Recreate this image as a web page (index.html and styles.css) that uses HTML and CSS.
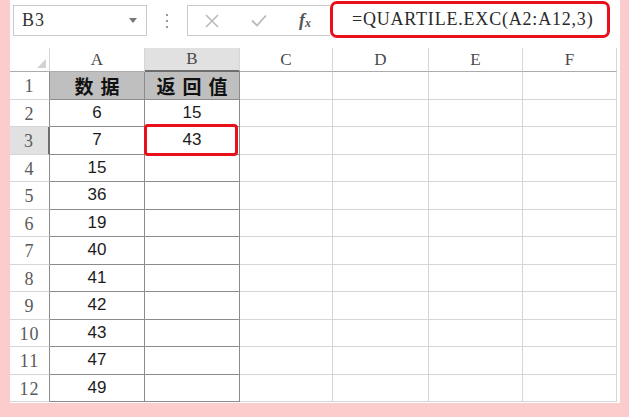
FILE: index.html
```html
<!DOCTYPE html>
<html lang="zh-CN">
<head>
  <meta charset="UTF-8" />
  <title>QUARTILE.EXC</title>
  <link rel="stylesheet" href="styles.css">
</head>
<body>
  <div class="sheet">
    <div class="toolbar">
      <div class="namebox">
        <span>B3</span>
        <span class="caret"></span>
      </div>
      <div class="dots"><i></i><i></i><i></i></div>
      <div class="buttons">
        <svg width="14" height="14" viewBox="0 0 14 14"><path d="M1 1L13 13M13 1L1 13" stroke="#b9b9b9" stroke-width="1.6" fill="none"/></svg>
        <svg width="16" height="13" viewBox="0 0 16 13"><path d="M1 6.5L6 11.5L15 1.5" stroke="#b9b9b9" stroke-width="1.8" fill="none"/></svg>
        <span class="fx">f<sub>x</sub></span>
      </div>
      <div class="formula">=QUARTILE.EXC(A2:A12,3)</div>
    </div>

    <div class="grid">
      <div class="hd corner"><span class="tri"></span></div>
      <div class="hd">A</div>
      <div class="hd sel">B</div>
      <div class="hd">C</div>
      <div class="hd">D</div>
      <div class="hd">E</div>
      <div class="hd">F</div>

      <div class="rh">1</div>
      <div class="c t title">数据</div>
      <div class="c t title">返回值</div>
      <div class="c"></div><div class="c"></div><div class="c"></div><div class="c"></div>

      <div class="rh">2</div>
      <div class="c t">6</div>
      <div class="c t">15</div>
      <div class="c"></div><div class="c"></div><div class="c"></div><div class="c"></div>

      <div class="rh sel">3</div>
      <div class="c t">7</div>
      <div class="c t active">43<span class="mark"></span></div>
      <div class="c"></div><div class="c"></div><div class="c"></div><div class="c"></div>

      <div class="rh">4</div>
      <div class="c t">15</div>
      <div class="c t"></div>
      <div class="c"></div><div class="c"></div><div class="c"></div><div class="c"></div>

      <div class="rh">5</div>
      <div class="c t">36</div>
      <div class="c t"></div>
      <div class="c"></div><div class="c"></div><div class="c"></div><div class="c"></div>

      <div class="rh">6</div>
      <div class="c t">19</div>
      <div class="c t"></div>
      <div class="c"></div><div class="c"></div><div class="c"></div><div class="c"></div>

      <div class="rh">7</div>
      <div class="c t">40</div>
      <div class="c t"></div>
      <div class="c"></div><div class="c"></div><div class="c"></div><div class="c"></div>

      <div class="rh">8</div>
      <div class="c t">41</div>
      <div class="c t"></div>
      <div class="c"></div><div class="c"></div><div class="c"></div><div class="c"></div>

      <div class="rh">9</div>
      <div class="c t">42</div>
      <div class="c t"></div>
      <div class="c"></div><div class="c"></div><div class="c"></div><div class="c"></div>

      <div class="rh">10</div>
      <div class="c t">43</div>
      <div class="c t"></div>
      <div class="c"></div><div class="c"></div><div class="c"></div><div class="c"></div>

      <div class="rh">11</div>
      <div class="c t">47</div>
      <div class="c t"></div>
      <div class="c"></div><div class="c"></div><div class="c"></div><div class="c"></div>

      <div class="rh">12</div>
      <div class="c t">49</div>
      <div class="c t"></div>
      <div class="c"></div><div class="c"></div><div class="c"></div><div class="c"></div>
    </div>
  </div>
</body>
</html>
```

FILE: styles.css
```css
* {
  box-sizing: border-box;
}

body {
  margin: 0;
  background: #fccbcb;
  height: 417px;
  overflow: hidden;
}

.sheet {
  margin-left: 10px;
  width: 610px;
  height: 403px;
  background: white;
}

/* formula bar */
.toolbar {
  height: 48px;
  display: flex;
  align-items: flex-start;
  padding-top: 5px;
}

.namebox {
  margin-left: 3px;
  width: 134px;
  height: 31px;
  border: 1px solid #c9c9c9;
  display: flex;
  align-items: center;
  justify-content: space-between;
  padding: 0 9px 0 8px;
  font-family: "Liberation Serif", serif;
  font-size: 18px;
  letter-spacing: 1px;
  color: #333;
}

.caret {
  border-left: 4px solid transparent;
  border-right: 4px solid transparent;
  border-top: 5px solid #777;
}

.dots {
  width: 40px;
  height: 31px;
  display: flex;
  flex-direction: column;
  align-items: center;
  justify-content: center;
  gap: 4px;
}

.dots i {
  width: 2px;
  height: 2px;
  background: #9a9a9a;
}

.buttons {
  width: 143px;
  height: 31px;
  border: 1px solid #c9c9c9;
  border-right: none;
  display: flex;
  align-items: center;
  padding-left: 17px;
  gap: 32px;
}

.fx {
  font-family: "Liberation Serif", serif;
  font-style: italic;
  font-weight: bold;
  font-size: 18px;
  color: #555;
}

.fx sub {
  font-size: 12px;
  vertical-align: -1px;
}

.formula {
  margin-top: -4px;
  width: 280px;
  height: 37px;
  border: 3px solid #e8101a;
  border-radius: 7px;
  padding-left: 19px;
  display: flex;
  align-items: center;
  font-family: "Liberation Serif", serif;
  font-size: 18px;
  letter-spacing: 0.8px;
  color: #2a2a2a;
}

/* grid */
.grid {
  display: grid;
  grid-template-columns: 40px 95px 95px 93px 96px 94px 94px;
  grid-template-rows: 24px repeat(12, 27.5px);
}

.hd {
  border-right: 1px solid #d6d6d6;
  border-bottom: 1px solid #ababab;
  display: flex;
  align-items: center;
  justify-content: center;
  font-family: "Liberation Serif", serif;
  font-size: 17px;
  color: #4a4a4a;
}

.hd.sel {
  background: #e1e1e1;
  border-bottom: 2px solid #6e6e6e;
}

.corner {
  position: relative;
}

.tri {
  position: absolute;
  right: 3px;
  bottom: 3px;
  border-left: 9px solid transparent;
  border-bottom: 9px solid #d2d2d2;
}

.rh {
  border-right: 1px solid #8c8c8c;
  border-bottom: 1px solid #d6d6d6;
  display: flex;
  align-items: center;
  justify-content: center;
  padding-top: 3px;
  font-family: "Liberation Serif", serif;
  font-size: 18px;
  letter-spacing: 1px;
  color: #5a5a5a;
}

.rh.sel {
  background: #e1e1e1;
  border-right: 2px solid #6e6e6e;
}

.c {
  border-right: 1px solid #d6d6d6;
  border-bottom: 1px solid #d6d6d6;
  display: flex;
  align-items: center;
  justify-content: center;
  font-family: "Liberation Sans", Arial, sans-serif;
  font-size: 17px;
  color: #1c1c1c;
}

.c.t {
  border-right-color: #8c8c8c;
  border-bottom-color: #8c8c8c;
}

.title {
  background: #bfbfbf;
  font-family: "Noto Sans CJK SC", sans-serif;
  font-weight: bold;
  font-size: 19px;
  letter-spacing: 7px;
  text-indent: 7px;
  color: #111;
}

.active {
  position: relative;
}

.mark {
  position: absolute;
  left: -1px;
  top: -3px;
  right: 1px;
  bottom: -2px;
  border: 3px solid #e8101a;
  border-radius: 4px;
}
```
